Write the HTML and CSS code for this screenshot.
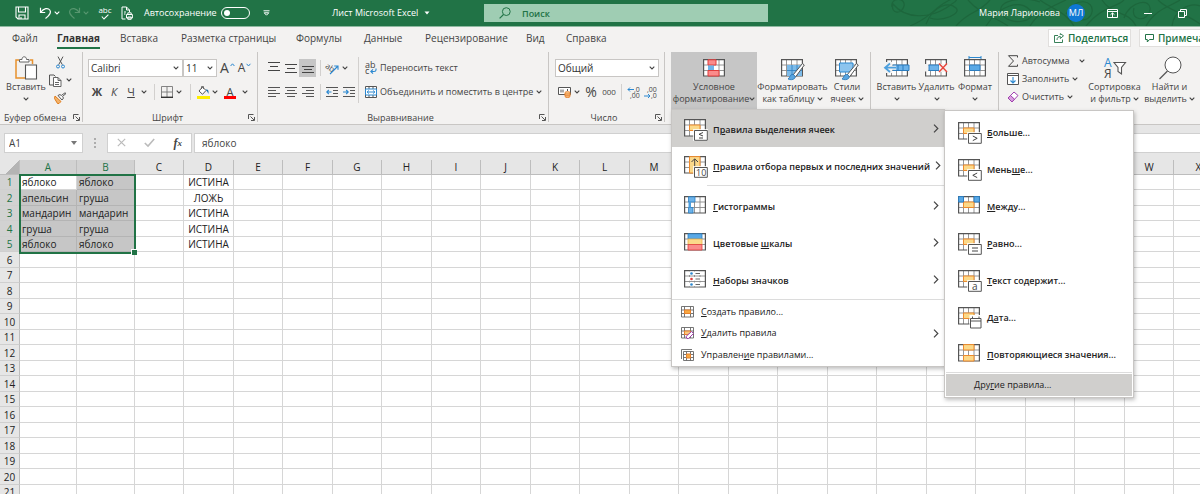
FILE: index.html
```html
<!DOCTYPE html>
<html lang="ru">
<head>
<meta charset="utf-8">
<title>Лист Microsoft Excel</title>
<link rel="stylesheet" href="styles.css">
</head>
<body>
<svg class="defs" aria-hidden="true">
  <symbol id="chev" viewBox="0 0 6 4"><path d="M.7.7 3 3 5.3.7" fill="none" stroke="currentColor" stroke-width="1.1"/></symbol>
  <symbol id="right" viewBox="0 0 6 9"><path d="M1 .7 4.8 4.5 1 8.3" fill="none" stroke="#444" stroke-width="1.2"/></symbol>
  <symbol id="launch" viewBox="0 0 7 7"><path d="M.5 5V.5H5.500M2.500 2.500 6 6M6.500 3V6.500H3" fill="none" stroke="#555"/></symbol>
  <symbol id="grid" viewBox="0 0 24 22"><path d="M.6.6H21.400V17H.6Z" fill="#fff"/><path d="M.6 6H21.400M.6 11.500H21.400M5.500.6V17M10.500.6V17M16 .6V17" fill="none" stroke="#8a8a8a" stroke-width=".9"/><path d="M.6.6H21.400V17H.6Z" fill="none" stroke="#555" stroke-width="1.200"/></symbol>
  <symbol id="rulegrid" viewBox="0 0 24 22"><use href="#grid" width="24" height="22"/><path d="M5.500 6H16V11.500H5.500Z" fill="#fbd98a" stroke="#ee8a2c"/></symbol>
  <symbol id="badge" viewBox="0 0 24 22"><path d="M9 10H24V22H9Z" fill="#fff" opacity=".8"/><path d="M10.500 11.500H23.300V21.300H10.500Z" fill="#fff" stroke="#555"/></symbol>
</svg>
<div class="app">
  <header class="titlebar">
    <svg class="swirl" viewBox="0 0 310 26" aria-hidden="true"><g fill="none" stroke="#1d663c" stroke-width="1.200"><path d="M2 7C0-3 16-3 14 6S0 14 3 4C16 20 40 18 56 8S70-6 56 2 40 18 20 26M36 24C44 4 60 2 66 8S52 22 40 18M66 26C80 10 88 14 100 0M78 0C90 14 104 16 118 26M96 26C110 4 130 0 140 10S120 28 112 14 134-4 150 2M140 26C150 10 164 6 176 0M150 0C164 10 176 12 184 26M176 14C186-4 204 0 202 12S180 22 184 8M196 26C212 6 226 8 234 0M212 0C222 16 238 10 246 26M234 18C240 0 262-2 260 10S240 22 244 8M256 26C266 8 282 6 290 0M268 0C280 12 294 12 310 24M282 26C284 10 300 2 310 6"/></g></svg>
    <div class="quick">
      <button class="q q1" aria-label="Сохранить"><svg width="14" height="14" viewBox="0 0 14 14"><path d="M1 1H13V13H3L1 11ZM3.500 1V6H10.500V1M4 13V9H10V13M6 11V13" fill="none" stroke="#fff" stroke-width="1.100"/></svg></button>
      <button class="q q2" aria-label="Отменить"><svg width="13" height="12" viewBox="0 0 13 12"><path d="M1.500.8V5.500H6.200M1.500 5.500C5 1 9 .6 10.800 3S11 8 6.500 11.400" fill="none" stroke="#fff" stroke-width="1.200"/></svg></button>
      <svg class="c" width="6" height="4"><use href="#chev"/></svg>
      <button class="q q3" aria-label="Вернуть"><svg width="13" height="12" viewBox="0 0 13 12"><path d="M11.500.8V5.500H6.800M11.500 5.500C8 1 4 .6 2.200 3S2 8 6.500 11.400" fill="none" stroke="#57966f" stroke-width="1.200"/></svg></button>
      <svg class="c dim" width="6" height="4"><use href="#chev"/></svg>
      <button class="q q4" aria-label="Орфография"><span>abc</span><svg width="8" height="6" viewBox="0 0 8 6"><path d="M.8 2.500 3 5 7.400.6" fill="none" stroke="#fff" stroke-width="1.100"/></svg></button>
      <button class="q q5" aria-label="Просмотр и печать"><svg width="12" height="14" viewBox="0 0 12 14"><path d="M4.500 13H1V1H5.500L8.500 4V6M5.500 1V4H8.500M3 6H5M3 8H4.500" fill="none" stroke="#fff"/><path d="M5.500 8.500H11.400V12H5.500ZM6.800 8.500V6.800H10.200V8.500M6.800 11H10.200V13.300H6.800Z" fill="none" stroke="#fff"/></svg></button>
      <label class="auto"><span>Автосохранение</span><input type="checkbox" class="toggle"></label>
      <svg class="more" width="7" height="6" viewBox="0 0 7 6"><path d="M.5.8H6.500" stroke="#fff"/><path d="M1.200 2.800H5.800L3.500 5.200Z" fill="none" stroke="#fff"/></svg>
    </div>
    <div class="doc"><span>Лист Microsoft Excel</span><svg width="6" height="4" viewBox="0 0 6 4"><path d="M.5.5H5.500L3 3.400Z" fill="#fff"/></svg></div>
    <label class="search"><svg width="12" height="12" viewBox="0 0 12 12"><circle cx="7.300" cy="4.600" r="3.900" fill="none" stroke="#217346"/><path d="M4.500 7.500.6 11.400" stroke="#217346" stroke-width="1.100"/></svg><input type="text" placeholder="Поиск" aria-label="Поиск"></label>
    <div class="account">
      <span>Мария Ларионова</span><span class="avatar">МЛ</span>
      <button aria-label="Параметры ленты"><svg width="11" height="9" viewBox="0 0 11 9"><path d="M.5.5H10.500V8.500H.5ZM.5 2.500H10.500M5.500 8V4M3.500 5.800 5.500 3.900 7.500 5.800" fill="none" stroke="#fff"/></svg></button>
      <button aria-label="Свернуть"><svg width="8" height="9" viewBox="0 0 8 9"><path d="M0 4.500H8" stroke="#fff"/></svg></button>
      <button aria-label="Восстановить"><svg width="9" height="9" viewBox="0 0 9 9"><path d="M.5 2.500H6.500V8.500H.5ZM2.500 2.500V.5H8.500V6.500H6.500" fill="none" stroke="#fff"/></svg></button>
    </div>
  </header>

  <div class="tabrow">
    <nav class="tabs">
      <button>Файл</button><button class="on">Главная</button><button>Вставка</button><button>Разметка страницы</button><button>Формулы</button><button>Данные</button><button>Рецензирование</button><button>Вид</button><button>Справка</button>
    </nav>
    <div class="share">
      <button><svg width="10" height="10" viewBox="0 0 10 10"><path d="M4 2.500H.5V9.500H8.500V6.500M3 7C3 4.500 4.500 3.500 6.300 3.500V5.500L9.500 2.800 6.300.6V2" fill="none" stroke="#217346" stroke-width=".9"/></svg>Поделиться</button>
      <button><svg width="9" height="9" viewBox="0 0 9 9"><path d="M.5.5H8.500V5.500H4.500L2.300 8V5.500H.5Z" fill="none" stroke="#217346"/></svg>Примечания</button>
    </div>
  </div>

  <div class="ribbon">
    <section class="group">
      <div class="body clip">
        <button class="big"><svg width="24" height="24" viewBox="0 0 24 24"><path d="M5 4H2V22H11M16 4H18.500V8" fill="none" stroke="#e8912d" stroke-width="1.500"/><path d="M5.500 6V3.500H8C8 1.500 9 .8 10.200.8S12.500 1.500 12.500 3.500H15V6Z" fill="#fff" stroke="#666"/><path d="M11.500 9H22.500V23H11.500Z" fill="#fff" stroke="#555" stroke-width="1.100"/></svg><span>Вставить</span><svg class="c" width="6" height="4"><use href="#chev"/></svg></button>
        <div class="cliptools">
          <button aria-label="Вырезать"><svg width="9" height="13" viewBox="0 0 9 13"><path d="M2 .6 6.300 8.700M7 .6 2.700 8.700" stroke="#555"/><circle cx="2" cy="10.500" r="1.500" fill="none" stroke="#2b88d0"/><circle cx="7" cy="10.500" r="1.500" fill="none" stroke="#2b88d0"/></svg></button>
          <button aria-label="Копировать"><svg width="13" height="13" viewBox="0 0 13 13"><path d="M4.500 11H.5V1H5L6.500 2.500" fill="none" stroke="#555"/><path d="M4.500 3.500H9L12 6.500V12.500H4.500ZM9 3.500V6.500H12M6 8.500H10M6 10.500H10" fill="#fff" stroke="#555" stroke-width=".9"/></svg><svg class="c" width="6" height="4"><use href="#chev"/></svg></button>
          <button aria-label="Формат по образцу"><svg width="13" height="12" viewBox="0 0 13 12"><path d="M1 4 7 9.500 5 11.500H3.500L.5 6.500Z" fill="#f3b36b" stroke="#e07c1b"/><path d="M4 3.500 8 8 9.500 6 8.500 4.500 12 1.500 11 .8 7.200 3.600 6 2.500Z" fill="#fff" stroke="#555"/></svg></button>
        </div>
      </div>
      <footer class="start"><span>Буфер обмена</span><svg width="7" height="7"><use href="#launch"/></svg></footer>
    </section>

    <section class="group">
      <div class="body font">
        <div class="line">
          <div class="field w95"><select aria-label="Шрифт"><option>Calibri</option></select><svg class="c" width="6" height="4"><use href="#chev"/></svg></div>
          <div class="field w34"><select aria-label="Размер"><option>11</option></select><svg class="c" width="6" height="4"><use href="#chev"/></svg></div>
          <button class="grow" aria-label="Увеличить размер">A<svg width="5" height="4" viewBox="0 0 5 4"><path d="M.6 3 2.500.8 4.400 3" fill="none" stroke="#2b88d0"/></svg></button>
          <button class="shrink" aria-label="Уменьшить размер">A<svg width="5" height="4" viewBox="0 0 5 4"><path d="M.6.8 2.500 3 4.400.8" fill="none" stroke="#2b88d0"/></svg></button>
        </div>
        <div class="line low">
          <button class="fmt w18"><b>Ж</b></button><button class="fmt w16"><i>К</i></button><button class="fmt w18"><u>Ч</u></button><span class="w8"><svg class="c" width="6" height="4"><use href="#chev"/></svg></span>
          <span class="sep w12"></span>
          <button class="w14" aria-label="Границы"><svg width="12" height="12" viewBox="0 0 12 12"><path d="M.5 11V.5H11.500V11M6 .5V11M.5 6H11.500" fill="none" stroke="#777" stroke-width=".9"/><path d="M0 11.300H12" stroke="#333" stroke-width="1.400"/></svg></button><span class="w10"><svg class="c" width="6" height="4"><use href="#chev"/></svg></span>
          <span class="sep w12"></span>
          <button class="w14" aria-label="Цвет заливки"><svg width="13" height="13" viewBox="0 0 13 13"><path d="M5.500 1 9 4.500 5.500 8.300 2 5Z" fill="#fff" stroke="#555"/><path d="M4.500 3V.5H6.500V3" fill="none" stroke="#555" stroke-width=".8"/><path d="M8.500 3.500C11.500 3 12 5 11.300 8 10.500 5 9.500 5 8.500 3.500" fill="#1d6fa5"/><path d="M0 10H13V13H0Z" fill="#ffee00"/></svg></button><span class="w10"><svg class="c" width="6" height="4"><use href="#chev"/></svg></span>
          <button class="w20 acol" aria-label="Цвет текста"><span>A</span></button><span class="w10"><svg class="c" width="6" height="4"><use href="#chev"/></svg></span>
        </div>
      </div>
      <footer><span>Шрифт</span><svg width="7" height="7"><use href="#launch"/></svg></footer>
    </section>

    <section class="group">
      <div class="body align">
        <div class="alignl">
          <div class="line">
            <button class="w17 bar" aria-label="По верхнему краю"><svg width="12" height="12" viewBox="0 0 12 12"><path d="M0 .5H12M2 4.500H10M0 8.500H12" stroke="#444" stroke-width="1.100"/></svg></button>
            <button class="w17 bar" aria-label="По середине"><svg width="12" height="12" viewBox="0 0 12 12"><path d="M0 2.500H12M2 6.500H10M0 10.500H12" stroke="#444" stroke-width="1.100"/></svg></button>
            <button class="w17 bar sel" aria-label="По нижнему краю"><svg width="12" height="12" viewBox="0 0 12 12"><path d="M0 4.500H12M2 7.500H10M0 10.500H12" stroke="#444" stroke-width="1.100"/></svg></button>
            <span class="sep w8"></span>
            <button class="w16" aria-label="Ориентация"><svg width="13" height="13" viewBox="0 0 13 13"><text x="0" y="7" font-size="8" fill="#444" transform="rotate(35 2 4)">ab</text><path d="M4 12 11.500 4.500M8.200 4H12V7.800" fill="none" stroke="#2b88d0" stroke-width="1.100"/></svg></button><span class="w10"><svg class="c" width="6" height="4"><use href="#chev"/></svg></span>
          </div>
          <div class="line low">
            <button class="w17" aria-label="По левому краю"><svg width="12" height="12" viewBox="0 0 12 12"><path d="M0 1.500H12M0 4.500H8M0 7.500H12M0 10.500H8" stroke="#555"/></svg></button>
            <button class="w17" aria-label="По центру"><svg width="12" height="12" viewBox="0 0 12 12"><path d="M0 1.500H12M2 4.500H10M0 7.500H12M2 10.500H10" stroke="#555"/></svg></button>
            <button class="w17" aria-label="По правому краю"><svg width="12" height="12" viewBox="0 0 12 12"><path d="M0 1.500H12M4 4.500H12M0 7.500H12M4 10.500H12" stroke="#555"/></svg></button>
            <span class="sep w8"></span>
            <button class="w16" aria-label="Уменьшить отступ"><svg width="12" height="12" viewBox="0 0 12 12"><path d="M0 1.500H12M7 4.500H12M7 7.500H12M0 10.500H12" stroke="#555"/><path d="M5.500 6H1M2.800 4 .8 6 2.800 8" fill="none" stroke="#2b88d0" stroke-width="1.100"/></svg></button>
            <button class="w17" aria-label="Увеличить отступ"><svg width="12" height="12" viewBox="0 0 12 12"><path d="M0 1.500H12M7 4.500H12M7 7.500H12M0 10.500H12" stroke="#555"/><path d="M0 6H5M3.200 4 5.200 6 3.200 8" fill="none" stroke="#2b88d0" stroke-width="1.100"/></svg></button>
          </div>
        </div>
        <div class="alignr">
          <button class="line txt"><svg width="12" height="14" viewBox="0 0 12 14"><text x="0" y="7" font-size="9" fill="#444">ab</text><text x="0" y="13" font-size="9" fill="#444">c</text><path d="M11 7.500V9C11 10 10.500 10.500 9 10.500H6M8 8.300 5.800 10.500 8 12.700" fill="none" stroke="#2b88d0" stroke-width="1.100"/></svg><span>Переносить текст</span></button>
          <button class="line low txt"><svg width="12" height="12" viewBox="0 0 12 12"><path d="M.5.5H11.500V11.500H.5Z" fill="#fff" stroke="#555"/><path d="M4 .5V3M8 .5V3M4 9V11.500M8 9V11.500" stroke="#555"/><path d="M.5 3H11.500V9H.5ZM2 6H10M3.800 4.500 2.200 6 3.800 7.500M8.200 4.500 9.800 6 8.200 7.500" fill="none" stroke="#2b88d0"/></svg><span>Объединить и поместить в центре</span><svg class="c" width="6" height="4"><use href="#chev"/></svg></button>
        </div>
      </div>
      <footer><span>Выравнивание</span><svg width="7" height="7"><use href="#launch"/></svg></footer>
    </section>

    <section class="group">
      <div class="body num">
        <div class="line"><div class="field w104"><select aria-label="Формат числа"><option>Общий</option></select><svg class="c" width="6" height="4"><use href="#chev"/></svg></div></div>
        <div class="line low">
          <button class="w18" aria-label="Финансовый формат"><svg width="13" height="11" viewBox="0 0 13 11"><path d="M.5.5H12.500V7.500H.5Z" fill="#fff" stroke="#555"/><path d="M3 2.500V5.500M5 2.500V5.500M9.500 2V4" stroke="#555"/><path d="M7 5.500C7 4.500 12 4.500 12 5.500V9.500C12 10.800 7 10.800 7 9.500ZM7 7H12M7 8.800H12" fill="#f8cd96" stroke="#e8812d"/></svg></button><span class="w8"><svg class="c" width="6" height="4"><use href="#chev"/></svg></span>
          <button class="w20 pct" aria-label="Процентный формат">%</button><button class="w16 zero" aria-label="Формат с разделителями">000</button>
          <span class="sep w8"></span>
          <button class="w17" aria-label="Увеличить разрядность"><svg width="14" height="13" viewBox="0 0 14 13"><path d="M7 3.500H1M3 1.500 1 3.500 3 5.500" fill="none" stroke="#2b88d0"/><text x="7" y="6" font-size="7" fill="#444">,0</text><text x="3" y="12" font-size="7" fill="#444">,00</text></svg></button>
          <button class="w17" aria-label="Уменьшить разрядность"><svg width="14" height="13" viewBox="0 0 14 13"><text x="3" y="6" font-size="7" fill="#444">,00</text><path d="M0 10H6M4 8 6 10 4 12" fill="none" stroke="#2b88d0"/><text x="7" y="12" font-size="7" fill="#444">,0</text></svg></button>
        </div>
      </div>
      <footer><span>Число</span><svg width="7" height="7"><use href="#launch"/></svg></footer>
    </section>

    <section class="group">
      <div class="body styles">
        <button class="big open"><svg width="24" height="24" viewBox="-1 -3 24 24"><use href="#grid" width="24" height="22"/><path d="M5 .8H13V6H5ZM5 11.500H16V17H5Z" fill="#fa8b8b" stroke="#e03c3c"/><path d="M5 6.500H11V11H5Z" fill="#6db3ea"/></svg><span>Условное</span><span>форматирование<svg class="c" width="6" height="4"><use href="#chev"/></svg></span></button>
        <button class="big"><svg width="24" height="24" viewBox="0 -3 24 24"><use href="#grid" width="24" height="22"/><path d="M6 6H21V17H6Z" fill="#7dbbe9"/><path d="M11 6V17M16 6V17M6 11.500H21" stroke="#2b7dc0" stroke-width=".8"/><path d="M12 16 21.500 4.500 23.300 6 14.500 18Z" fill="#fff" stroke="#555"/><path d="M7 20C9 19 8.500 16 11 15.500S15 18 13.500 19.500 9 21 7 20Z" fill="#5aa5df" stroke="#2574b5" stroke-width=".8"/></svg><span>Форматировать</span><span>как таблицу <svg class="c" width="6" height="4"><use href="#chev"/></svg></span></button>
        <button class="big"><svg width="24" height="24" viewBox="0 -3 24 24"><use href="#grid" width="24" height="22"/><path d="M4.500 4H18V13H4.500Z" fill="#8cc4ee" stroke="#2b88d0"/><path d="M12 16 21.500 4.500 23.300 6 14.500 18Z" fill="#fff" stroke="#555"/><path d="M7 20C9 19 8.500 16 11 15.500S15 18 13.500 19.500 9 21 7 20Z" fill="#5aa5df" stroke="#2574b5" stroke-width=".8"/></svg><span>Стили</span><span>ячеек <svg class="c" width="6" height="4"><use href="#chev"/></svg></span></button>
      </div>
    </section>

    <section class="group">
      <div class="body cells">
        <button class="big"><svg width="26" height="24" viewBox="0 -3 26 24"><use href="#grid" x="2" width="24" height="22"/><path d="M9 6H25V11.500H9Z" fill="#6db3ea" stroke="#2b7dc0"/><path d="M14 6V11.500M19 6V11.500" stroke="#2b7dc0"/><path d="M0 3H8V14H0Z" fill="#f3f2f1"/><path d="M12 8.700H1M6 4 1 8.700 6 13.500" fill="none" stroke="#f3f2f1" stroke-width="4"/><path d="M12 8.700H1M6 4.500 1 8.700 6 13" fill="none" stroke="#4da0de" stroke-width="1.800"/></svg><span>Вставить</span><svg class="c" width="6" height="4"><use href="#chev"/></svg></button>
        <button class="big"><svg width="24" height="24" viewBox="0 -3 24 24"><use href="#grid" width="24" height="22"/><path d="M4 6H14V11.500H4Z" fill="#6db3ea" stroke="#2b7dc0"/><path d="M0 5H3V12.500H0ZM14 5H24V13H14Z" fill="#f3f2f1"/><path d="M14 4.500 22 13M22 4.500 14 13" stroke="#e8443a" stroke-width="1.400"/></svg><span>Удалить</span><svg class="c" width="6" height="4"><use href="#chev"/></svg></button>
        <button class="big"><svg width="24" height="24" viewBox="-1 -3 24 24"><use href="#grid" width="24" height="22"/><path d="M5.500 6H16V11.500H5.500Z" fill="#5aa9e6" stroke="#2b7dc0"/><path d="M5-1.500H17M5-3V0M17-3V0" fill="none" stroke="#2b88d0"/></svg><span>Формат</span><svg class="c" width="6" height="4"><use href="#chev"/></svg></button>
      </div>
    </section>

    <section class="group last">
      <div class="body edit">
        <div class="edits">
          <button><svg width="12" height="12" viewBox="0 0 12 12"><path d="M10.500 2.500V.7H1.500L6.500 6 1.500 11.300H10.500V9.500" fill="none" stroke="#444"/></svg><span>Автосумма</span><svg class="c gap" width="6" height="4"><use href="#chev"/></svg></button>
          <button><svg width="12" height="12" viewBox="0 0 12 12"><path d="M.5.5H11.500V11.500H.5ZM.5 2.500H11.500" fill="#fff" stroke="#555"/><path d="M6 4V10M3.500 7.500 6 10 8.500 7.500" fill="none" stroke="#2b88d0" stroke-width="1.100"/></svg><span>Заполнить</span><svg class="c" width="6" height="4"><use href="#chev"/></svg></button>
          <button><svg width="12" height="12" viewBox="0 0 12 12"><path d="M1 7 7 1 11 4.500 5 11Z" fill="#fff" stroke="#a03fae"/><path d="M1 7 3.500 4.500 7.500 8.200 5 11Z" fill="#d9a0e0" stroke="#a03fae"/></svg><span>Очистить</span><svg class="c" width="6" height="4"><use href="#chev"/></svg></button>
        </div>
        <button class="big"><svg width="24" height="24" viewBox="0 0 24 24"><text x="1" y="11" font-size="12" fill="#2b88d0">А</text><text x="1" y="22" font-size="12" fill="#444">Я</text><path d="M11 6.500H22.500L18.500 11.500V18L15 15.500V11.500Z" fill="#fff" stroke="#555" stroke-width="1.100"/></svg><span>Сортировка</span><span>и фильтр <svg class="c" width="6" height="4"><use href="#chev"/></svg></span></button>
        <button class="big"><svg width="24" height="24" viewBox="0 0 24 24"><circle cx="15" cy="9" r="8" fill="#fff" stroke="#555"/><path d="M9.500 15 1.500 23" stroke="#555" stroke-width="1.200"/></svg><span>Найти и</span><span>выделить <svg class="c" width="6" height="4"><use href="#chev"/></svg></span></button>
      </div>
    </section>
  </div>

  <div class="formula">
    <div class="namebox"><input aria-label="Имя ячейки" value="A1"><svg width="6" height="4" viewBox="0 0 6 4"><path d="M0 0H6L3 4Z" fill="#777"/></svg></div>
    <svg class="dots" width="2" height="10" viewBox="0 0 2 10"><path d="M0 1H2M0 5H2M0 9H2" stroke="#999" stroke-width="1.500"/></svg>
    <div class="fx">
      <button aria-label="Отмена"><svg width="9" height="9" viewBox="0 0 9 9"><path d="M.8.8 8.200 8.200M8.200.8.8 8.200" stroke="#bbb" stroke-width="1.200"/></svg></button>
      <button aria-label="Ввод"><svg width="11" height="9" viewBox="0 0 11 9"><path d="M.8 5 4 8 10.200 1" fill="none" stroke="#bbb" stroke-width="1.600"/></svg></button>
      <button class="fn" aria-label="Вставить функцию">f<small>x</small></button>
    </div>
    <input class="value" aria-label="Строка формул" value="яблоко">
  </div>

  <main class="sheet">
    <table><thead><tr id="cols"></tr></thead><tbody id="rows"></tbody></table>
    <div class="selection"></div>
  </main>

  <div class="menu main" role="menu">
    <button class="row hot"><svg width="24" height="22"><use href="#rulegrid"/><use href="#badge"/><path d="M19 13.500 15 15.300 19 17M15 19H19" fill="none" stroke="#444"/></svg><span>П<u>р</u>авила выделения ячеек</span><svg class="r" width="6" height="9"><use href="#right"/></svg></button>
    <button class="row"><svg width="24" height="22"><use href="#grid"/><path d="M5.500 .6H16V17H5.500Z" fill="#fbd98a" stroke="#ee8a2c"/><path d="M10.700 11V3M7.500 6 10.700 2.800 14 6" fill="none" stroke="#444"/><use href="#badge"/><text x="12" y="20" font-size="9" fill="#444">10</text></svg><span><u>П</u>равила отбора первых и последних значений</span><svg class="r" width="6" height="9"><use href="#right"/></svg></button>
    <hr class="indent">
    <button class="row"><svg width="24" height="22"><use href="#grid"/><path d="M4.500 .8H11V6H4.500ZM4.500 11.500H9V17H4.500Z" fill="#6db3ea" stroke="#2b7dc0" stroke-width=".8"/><path d="M4.500 6H7V11.500H4.500Z" fill="#4b9fe0"/></svg><span><u>Г</u>истограммы</span><svg class="r" width="6" height="9"><use href="#right"/></svg></button>
    <button class="row"><svg width="24" height="22"><use href="#grid"/><path d="M4 .8H18V6H4Z" fill="#5aa9e6" stroke="#2b7dc0" stroke-width=".8"/><path d="M4 6H18V11.500H4Z" fill="#fbd98a" stroke="#eeb04c" stroke-width=".8"/><path d="M4 11.500H18V17H4Z" fill="#fa8b8b" stroke="#e03c3c" stroke-width=".8"/></svg><span>Цветовые <u>ш</u>калы</span><svg class="r" width="6" height="9"><use href="#right"/></svg></button>
    <button class="row"><svg width="24" height="22"><use href="#grid"/><path d="M5 1.500H17V5H5ZM5 7H17V10.700H5ZM5 12.500H17V16.300H5Z" fill="#fff"/><path d="M11.500 3.500H16M11.500 9H16M11.500 14.500H16" stroke="#666"/><circle cx="7.500" cy="3.500" r="1.300" fill="#2b88d0"/><circle cx="7.500" cy="9" r="1.300" fill="#e03c3c"/><circle cx="7.500" cy="14.500" r="1.300" fill="#2b88d0"/></svg><span><u>Н</u>аборы значков</span><svg class="r" width="6" height="9"><use href="#right"/></svg></button>
    <hr>
    <button class="mini"><svg width="13" height="12" viewBox="0 0 13 12"><path d="M.5.5H12.500V11H.5ZM.5 4H12.500M.5 7.500H12.500M3.500.5V11M9.500.5V11" fill="#fff" stroke="#666" stroke-width=".9"/><path d="M3.500 4H9.500V7.500H3.500Z" fill="#f7a941" stroke="#e8812d"/></svg><span><u>С</u>оздать правило...</span></button>
    <button class="mini"><svg width="13" height="12" viewBox="0 0 13 12"><path d="M.5.5H12.500V11H.5ZM.5 4H12.500M.5 7.500H12.500M3.500.5V11M9.500.5V11" fill="#fff" stroke="#666" stroke-width=".9"/><path d="M3.500 4H9.500V7.500H3.500Z" fill="#f7c981" stroke="#e8812d"/><path d="M5 9.500 10.500 4.500 12.500 6.500 7.500 11.500H6Z" fill="#fff" stroke="#a03fae"/></svg><span><u>У</u>далить правила</span><svg class="r" width="6" height="9"><use href="#right"/></svg></button>
    <button class="mini"><svg width="13" height="12" viewBox="0 0 13 12"><path d="M.5 10V.5H11M2.500 2.500H12.500V11.500H2.500ZM2.500 5.500H12.500M2.500 8.500H12.500M5.500 2.500V11.500M9.500 2.500V11.500" fill="none" stroke="#666" stroke-width=".9"/><path d="M5.500 5H9.500V9H5.500Z" fill="#f7a941" stroke="#e8812d"/></svg><span>Управлен<u>и</u>е правилами...</span></button>
  </div>

  <div class="menu sub" role="menu">
    <button class="row"><svg width="24" height="22"><use href="#rulegrid"/><use href="#badge"/><path d="M14.800 14 19.200 16.300 14.800 18.600" fill="none" stroke="#444"/></svg><span><u>Б</u>ольше...</span></button>
    <button class="row"><svg width="24" height="22"><use href="#rulegrid"/><use href="#badge"/><path d="M19.200 14 14.800 16.300 19.200 18.600" fill="none" stroke="#444"/></svg><span>Мень<u>ш</u>е...</span></button>
    <button class="row"><svg width="24" height="22"><use href="#rulegrid"/><path d="M.6.6H5.500V6H.6ZM16 .6H21.400V6H16Z" fill="#5aa9e6" stroke="#2b7dc0"/></svg><span><u>М</u>ежду...</span></button>
    <button class="row"><svg width="24" height="22"><use href="#rulegrid"/><use href="#badge"/><path d="M14 15H20M14 18H20" stroke="#444"/></svg><span><u>Р</u>авно...</span></button>
    <button class="row"><svg width="24" height="22"><use href="#rulegrid"/><use href="#badge"/><text x="14" y="20" font-size="10" fill="#444">a</text></svg><span><u>Т</u>екст содержит...</span></button>
    <button class="row"><svg width="24" height="22"><use href="#rulegrid"/><path d="M11.500 8H24V22H11.500Z" fill="#fff"/><path d="M12.500 11.500H23V21H12.500ZM12.500 14H23M14.500 9.500V11.500M21 9.500V11.500" fill="none" stroke="#555"/></svg><span>Д<u>а</u>та...</span></button>
    <button class="row"><svg width="24" height="22"><use href="#grid"/><path d="M5.500.6H16V6H5.500ZM5.500 11.500H16V17H5.500Z" fill="#fbd98a" stroke="#ee8a2c"/></svg><span><u>П</u>овторяющиеся значения...</span></button>
    <hr>
    <button class="other hot">Дру<u>г</u>ие правила...</button>
  </div>
</div>
<script src="sheet.js"></script>
</body>
</html>
```

FILE: sheet.js
```js
const letters = 'ABCDEFGHIJKLMNOPQRSTUVWX'.split('');
const data = [
  ['яблоко', 'яблоко', 'ИСТИНА'],
  ['апельсин', 'груша', 'ЛОЖЬ'],
  ['мандарин', 'мандарин', 'ИСТИНА'],
  ['груша', 'груша', 'ИСТИНА'],
  ['яблоко', 'яблоко', 'ИСТИНА']
];

const cell = (tag, text, cls) => {
  const el = document.createElement(tag);
  el.textContent = text || '';
  if (cls) el.className = cls;
  return el;
};

const head = document.getElementById('cols');
head.append(cell('th', '', 'corner'));
letters.forEach((l, i) => head.append(cell('th', l, i < 2 ? 'picked' : '')));

const body = document.getElementById('rows');
for (let r = 0; r < 21; r++) {
  const tr = document.createElement('tr');
  const d = data[r];
  tr.append(cell('th', String(r + 1), d ? 'picked' : ''));
  letters.forEach((l, i) => {
    const text = d && (i < 2 ? d[i] : i === 3 ? d[2] : '');
    let cls = '';
    if (d && i < 2) cls = r + i ? 'filled' : 'active';
    if (i === 3) cls = 'mid';
    tr.append(cell('td', text, cls));
  });
  body.append(tr);
}
```

FILE: styles.css
```css
* { box-sizing: border-box; }
body { margin: 0; font: 10px/12px "Open Sans", "Noto Sans", sans-serif; color: #444; background: #fff; }
button, input, select { font: inherit; color: inherit; margin: 0; padding: 0; border: 0; background: none; }
button { display: flex; align-items: center; white-space: nowrap; flex: none; }
svg { display: block; flex: none; overflow: visible; font-weight: 400; }
svg.defs { position: absolute; width: 0; height: 0; }
.app { position: relative; height: 100vh; overflow: hidden; display: flex; flex-direction: column; }
.app > * { flex: none; }

/* title bar */
.titlebar { position: relative; height: 27px; display: flex; align-items: center; background: #217346; color: #fff; border-bottom: 1px solid #8fb9a1; white-space: nowrap; }
.titlebar .swirl { position: absolute; right: 0; top: 0; width: 310px; height: 26px; overflow: hidden; }
.quick { width: 332px; display: flex; align-items: center; padding-left: 15px; }
.q { justify-content: center; }
.q1 { width: 14px; }
.q2 { width: 13px; margin-left: 10px; }
.q3 { width: 13px; margin-left: 8px; }
.q2 + .c, .q3 + .c { margin-left: 2px; }
.q4 { width: 16px; margin-left: 8px; flex-direction: column; font-size: 8px; line-height: 8px; }
.q5 { width: 12px; margin-left: 8px; }
.auto { display: flex; align-items: center; margin-left: 11px; width: 106px; justify-content: space-between; font-size: 9px; font-weight: 500; }
.toggle { appearance: none; width: 29px; height: 12px; border: 1px solid #fff; border-radius: 6px; display: flex; align-items: center; padding-left: 2px; }
.toggle::before { content: ""; width: 6px; height: 6px; border-radius: 50%; background: #fff; }
.more { margin-left: 13px; }
.doc { width: 152px; display: flex; align-items: center; gap: 6px; font-size: 9px; font-weight: 500; }
.search { width: 284px; height: 18px; display: flex; align-items: center; gap: 11px; padding-left: 15px; background: #9fcdb3; color: #217346; }
.search input { flex: 1; min-width: 0; }
.search input::placeholder { color: #217346; font-weight: 600; font-size: 9px; opacity: 1; }
.account { position: relative; margin-left: auto; display: flex; align-items: center; padding-right: 13px; font-size: 9px; }
.avatar { width: 18px; height: 18px; line-height: 18px; border-radius: 50%; background: #0f78d4; text-align: center; margin: 0 22px 0 7px; }
.account button + button { margin-left: 26px; }

/* tabs */
.tabrow { height: 25px; display: flex; justify-content: space-between; background: #f3f2f1; overflow: hidden; }
.tabs { display: grid; grid-template-columns: 45px 63px 61px 115px 68px 61px 101px 40px auto; padding-left: 12px; align-items: start; justify-items: start; }
.tabs button { height: 22px; border-bottom: 2px solid transparent; padding-top: 1px; }
.tabs .on { font-weight: 700; color: #333; border-color: #217346; }
.share { display: flex; gap: 8px; padding-top: 2px; width: 152px; }
.share button { height: 18px; gap: 4px; padding: 0 5px; width: 83px; background: #fff; border: 1px solid #e1dfdd; font-weight: 600; color: #217346; }

/* ribbon */
.ribbon { height: 73px; display: grid; grid-template-columns: 83px 175px 291px 116px 206px 128px 1fr; background: #f3f2f1; border-bottom: 1px solid #c8c6c4; overflow: hidden; }
.group { position: relative; display: flex; flex-direction: column; min-width: 0; }
.group::after { content: ""; position: absolute; right: 0; top: 0; bottom: 3px; width: 1px; background: #c8c6c4; }
.group.last::after { display: none; }
.body { height: 58px; display: flex; }
.group footer { display: flex; align-items: center; height: 15px; padding: 0 3px 0 4px; font-size: 9px; white-space: nowrap; }
.group footer span { flex: 1; text-align: center; }
.group footer.start span { text-align: left; }
.c { color: #444; }
.titlebar .c { color: #fff; }
.titlebar .c.dim { color: #57966f; }
.line { display: flex; align-items: center; height: 18px; }
.low { margin-top: 6px; }
.line > span, .line > button { display: flex; justify-content: center; align-items: center; }
.line.txt, .txt { justify-content: flex-start; gap: 3px; }
.w8 { width: 8px; } .w10 { width: 10px; } .w12 { width: 12px; } .w14 { width: 14px; } .w16 { width: 16px; } .w17 { width: 17px; } .w18 { width: 18px; } .w20 { width: 20px; }
.sep { height: 16px; background: linear-gradient(#d2d0ce, #d2d0ce) center / 1px 100% no-repeat; }
.field { position: relative; height: 18px; background: #fff; border: 1px solid #c8c6c4; }
.field select { appearance: none; width: 100%; height: 16px; padding-left: 2px; color: #333; }
.field svg { position: absolute; right: 3px; top: 6px; }
.w95 { width: 95px; } .w34 { width: 34px; } .w104 { width: 104px; }

.big { flex-direction: column; font-size: 9px; height: 58px; padding-top: 4px; }
.big > svg:first-child { margin-bottom: 1px; }
.big span { display: flex; align-items: center; gap: 2px; height: 12px; }
.big > .c { margin-top: 4px; }
.clip > .big { width: 40px; margin-left: 6px; }
.cliptools { display: flex; flex-direction: column; padding: 1px 0 0 3px; }
.cliptools button { height: 18px; min-width: 13px; justify-content: center; gap: 4px; }
.font { flex-direction: column; padding: 7px 0 0 5px; }
.grow, .shrink { gap: 1px; font-size: 14px; }
.grow svg, .shrink svg { margin-bottom: 7px; }
.grow { margin-left: 3px; }
.shrink { font-size: 12px; margin-left: 3px; }
.fmt { font-size: 11px; }
.acol span { width: 12px; height: 13px; line-height: 11px; font-size: 11px; border-bottom: 3px solid red; text-align: center; }
.alignl { width: 101px; padding: 7px 0 0 7px; background: linear-gradient(#d2d0ce, #d2d0ce) right 5px / 1px 46px no-repeat; }
.sel { background: #c6c6c6; height: 18px; }
.alignr { padding: 7px 0 0 6px; font-size: 9px; }
.gap { margin-left: 6px; }
.num { flex-direction: column; padding: 7px 0 0 6px; }
.pct { font-size: 14px; }
.zero { font-size: 8px; }
.styles { padding-left: 6px; }
.styles .big:nth-child(1) { width: 86px; }
.styles .big:nth-child(2) { width: 71px; }
.styles .big:nth-child(3) { width: 38px; }
.open { background: #c6c6c6; }
.open span { gap: 0; }
.cells { padding-left: 5px; }
.cells .big:nth-child(1) { width: 41px; }
.cells .big:nth-child(2) { width: 39px; }
.cells .big:nth-child(3) { width: 38px; }
.edit { padding-left: 8px; }
.edits { width: 80px; font-size: 9px; }
.edits button { height: 18px; gap: 3px; }
.edit > .big { width: 55px; }

/* formula bar */
.formula { height: 35px; display: flex; align-items: center; background: #e6e6e6; padding: 0 0 0 4px; }
.namebox { width: 79px; height: 20px; display: flex; align-items: center; background: #fff; border: 1px solid #d0d0d0; padding: 0 5px 0 4px; }
.namebox input { flex: 1; min-width: 0; }
.dots { margin: 0 11px; }
.fx { width: 85px; height: 20px; display: flex; align-items: center; justify-content: space-between; padding: 0 9px; background: #fff; border: 1px solid #d0d0d0; }
.fn { font: italic 700 12px/14px "Liberation Serif", serif; }
.fn small { font-size: 9px; }
.value { flex: 1; min-width: 0; height: 20px; margin-left: 2px; padding-left: 7px; background: #fff; border: 1px solid #d0d0d0; border-right: 0; }

/* sheet */
.sheet { position: relative; }
table { border-collapse: separate; border-spacing: 0; table-layout: fixed; width: 1223px; color: #222; }
th, td { width: 49px; height: 15px; padding: 1px 2px 0; line-height: 13px; border: 0 solid #d6d6d6; border-width: 0 1px 1px 0; font-weight: 400; text-align: left; white-space: nowrap; }
tr > :nth-child(2n+5) { width: 50px; }
tr > :nth-child(1) { width: 20px; }
tr > :nth-child(2) { width: 57px; }
tr > :nth-child(3) { width: 58px; }
tbody tr:nth-child(even) > * { height: 16px; }
th { background: #e6e6e6; text-align: center; border-color: #bdbdbd; padding: 1px 0 0; }
tbody th { border-bottom-color: #cfcfcf; }
th.picked { background: #d2d2d2; color: #217346; }
th.corner { background: linear-gradient(135deg, #e6e6e6 60%, #b4b4b4 60%); }
.filled { background: #c6c6c6; border-color: #b4b4b4; }
.mid { text-align: center; }
.selection { position: absolute; left: 19px; top: 14px; width: 117px; height: 80px; border: 2px solid #217346; }
.selection::after { content: ""; position: absolute; right: -3px; bottom: -3px; width: 5px; height: 5px; background: #217346; border: 1px solid #fff; border-width: 1px 0 0 1px; }

/* menus */
.menu { position: absolute; background: #fff; border: 1px solid #c8c6c4; box-shadow: 1px 2px 4px rgba(0, 0, 0, .25); color: #222; }
.main { left: 671px; top: 109px; width: 274px; }
.sub { left: 944px; top: 110px; width: 190px; padding: 2px 1px 1px; }
.menu button { width: 100%; }
.row { height: 37px; padding: 3px 5px 0 12px; gap: 5px; font-size: 9px; font-weight: 600; }
.row .r { margin-bottom: 3px; }
.row span, .mini span { flex: 1; text-align: left; }
.main .mini { height: 21px; padding: 0 5px 0 9px; gap: 7px; font-size: 9px; }
.main .mini + .mini { height: 22px; }
.hot { background: #d0cfcd; }
.menu hr { margin: 1px 0; border: 0; height: 1px; background: #dcdcdc; }
.sub hr { margin: 0 0 1px; }
.menu hr.indent { margin-left: 35px; }
.other { height: 22px; padding-left: 28px; font-size: 9px; }
```
